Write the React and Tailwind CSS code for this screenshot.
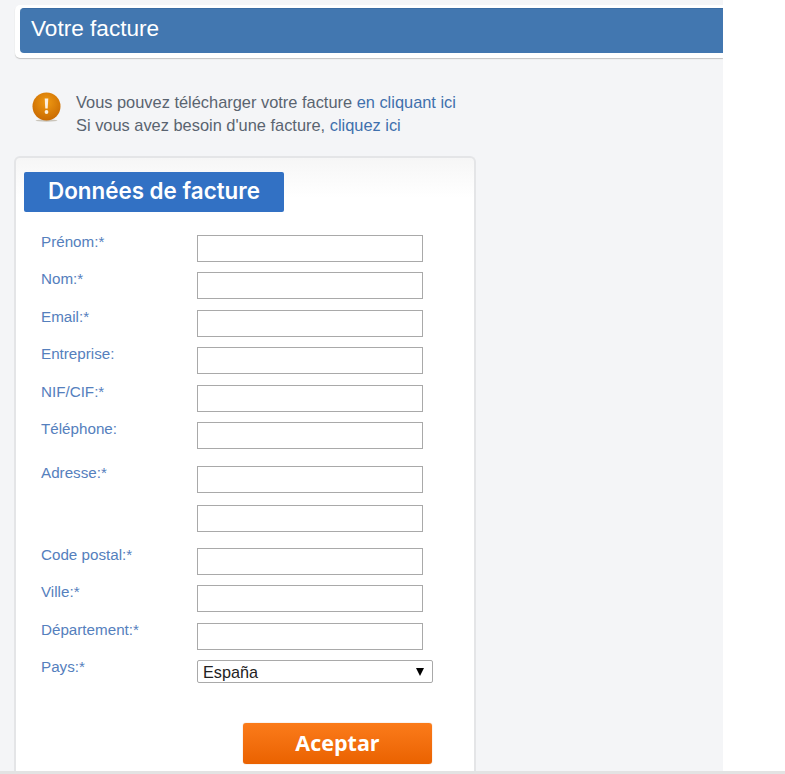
const fields = [
  { label: "Prénom:*", mb: "mb-[10px]" },
  { label: "Nom:*", mb: "mb-[11px]" },
  { label: "Email:*", mb: "mb-[10px]" },
  { label: "Entreprise:", mb: "mb-[11px]" },
  { label: "NIF/CIF:*", mb: "mb-[10px]" },
  { label: "Téléphone:", mb: "mb-[17px]" },
  { label: "Adresse:*", mb: "mb-[12px]" },
  { label: "", mb: "mb-[16px]" },
  { label: "Code postal:*", mb: "mb-[10px]" },
  { label: "Ville:*", mb: "mb-[11px]" },
  { label: "Département:*", mb: "mb-[10px]" },
];

function Row({ label, mb }) {
  return (
    <div className={`flex items-start ${mb}`}>
      <label className="w-[156px] text-[15.2px] leading-[13px] text-[#5580bd]">{label}</label>
      <input type="text" className="w-[226px] h-[27px] bg-white border border-[#a9a9a9]" />
    </div>
  );
}

function WarnIcon() {
  return (
    <svg width="32" height="32" viewBox="0 0 32 32" className="shrink-0 -mt-[1px]">
      <defs>
        <radialGradient id="warn" cx="50%" cy="35%" r="65%">
          <stop offset="0%" stopColor="#f09a12" />
          <stop offset="100%" stopColor="#c96a02" />
        </radialGradient>
      </defs>
      <ellipse cx="15.5" cy="28.5" rx="11" ry="1.2" fill="#c9c4ba" />
      <circle cx="15.5" cy="14.5" r="14" fill="url(#warn)" />
      <path d="M13.7 6.5h3.6l-.6 10h-2.4z" fill="#fbefe0" />
      <circle cx="15.5" cy="20" r="1.9" fill="#fbefe0" />
    </svg>
  );
}

export default function App() {
  return (
    <div className="w-[785px] h-[774px] overflow-hidden bg-white font-['Liberation_Sans',Arial,sans-serif]">
      <div className="w-[723px] h-[771px] bg-[#f4f5f7] pt-[5px] overflow-hidden">
        <div className="ml-[15px] h-[53px] bg-white rounded-l-[5px] pl-[5px] pt-[3px] pb-[4px] shadow-[0_1px_1px_#c4c4c4]">
          <div className="h-[45px] bg-[#4277b0] border-t border-[#3a6ca3] rounded-l-[4px] pl-[11px] text-[22.6px] leading-[39px] text-white">
            Votre facture
          </div>
        </div>

        <div className="flex items-start pl-[31px] pt-[35px]">
          <WarnIcon />
          <div className="ml-[13px] text-[16.4px] leading-[23px] text-[#5a6470] -mt-[2px]">
            <p>Vous pouvez télécharger votre facture <a className="text-[#3f70ad]">en cliquant ici</a></p>
            <p>Si vous avez besoin d'une facture, <a className="text-[#3f70ad]">cliquez ici</a></p>
          </div>
        </div>

        <div className="ml-[14px] mt-[19px] w-[462px] h-[640px] bg-gradient-to-b from-[#f6f6f6] to-white to-[40px] border-2 border-b-0 border-[#e4e5e7] rounded-t-[6px] pl-[8px] pt-[14px]">
          <div className="w-[260px] h-[40px] bg-[#3271c4] rounded-[2px] pl-[24px] font-['Inter',sans-serif] font-semibold text-[22.4px] leading-[37px] text-white">
            Données de facture
          </div>
          <div className="mt-[23px] pl-[17px]">
            {fields.map((f, i) => <Row key={i} {...f} />)}
            <div className="flex items-start">
              <label className="w-[156px] text-[15.2px] leading-[13px] text-[#5580bd]">Pays:*</label>
              <select className="w-[236px] h-[23px] bg-white border border-[#a9a9a9] rounded-[2px] pl-[5px] pr-[4px] py-0 text-[16.2px] leading-[18px] text-[#222] appearance-none">
                <option>España</option>
              </select>
              <span className="-ml-[17px] mt-[8px] h-0 w-0 border-x-[4px] border-t-[8px] border-x-transparent border-t-black pointer-events-none" />
            </div>
            <div className="pl-[202px] pt-[40px]">
              <button className="w-[189px] h-[41px] bg-gradient-to-b from-[#fb7b19] to-[#ea6200] rounded-[3px] shadow-[0_0_1px_#c98a5a] font-['Open_Sans',sans-serif] font-bold text-[21.5px] text-white">
                Aceptar
              </button>
            </div>
          </div>
        </div>
      </div>
      <div className="h-[3px] bg-[#e3e3e3]" />
    </div>
  );
}
